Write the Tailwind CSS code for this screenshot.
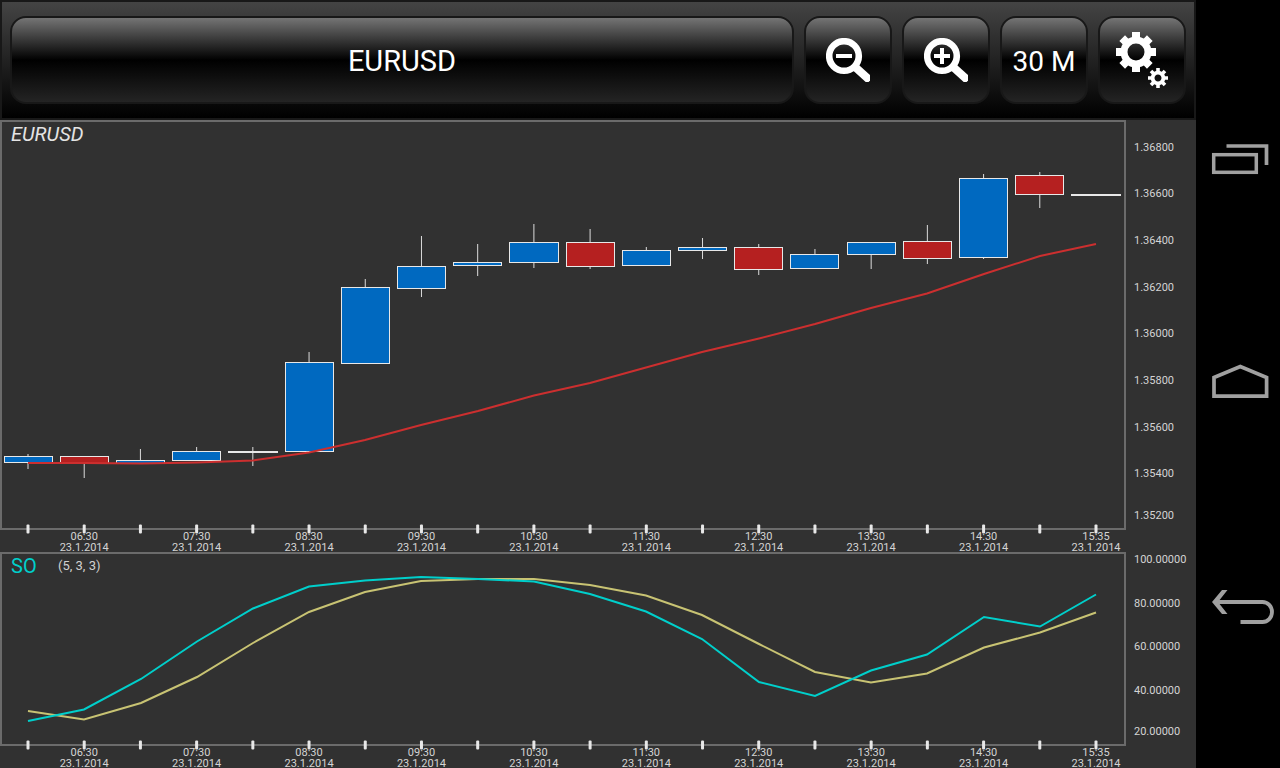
<!DOCTYPE html>
<html lang="en">
<head>
<meta charset="utf-8">
<meta name="viewport" content="width=device-width, initial-scale=1">
<title>EURUSD</title>
<script src="https://cdn.jsdelivr.net/npm/@tailwindcss/browser@4"></script>
</head>
<body class="flex min-h-screen bg-black font-[Roboto,sans-serif] text-white">
<main class="min-w-0 flex-1 bg-[#313131]">
  <header class="flex gap-2.5 border-2 border-[#181818] bg-linear-to-b/srgb from-[#444444] to-black px-2 py-3.5">
    <button type="button" class="h-22 flex-1 rounded-2xl border-2 border-[#181818] bg-linear-to-b/srgb from-[#747474] via-black to-[#242424] pt-1 text-[29px]">EURUSD</button>
    <button type="button" aria-label="Zoom out" class="flex size-22 items-center justify-center rounded-2xl border-2 border-[#181818] bg-linear-to-b/srgb from-[#747474] via-black to-[#242424]">
      <svg class="size-11" viewBox="0 0 44 44" fill="none" stroke="#fff">
        <circle cx="18" cy="18" r="14.8" stroke-width="6.6"/>
        <path d="M10 18H26" stroke-width="4"/>
        <path d="M28 28L44 42.5" stroke-width="8"/>
      </svg>
    </button>
    <button type="button" aria-label="Zoom in" class="flex size-22 items-center justify-center rounded-2xl border-2 border-[#181818] bg-linear-to-b/srgb from-[#747474] via-black to-[#242424]">
      <svg class="size-11" viewBox="0 0 44 44" fill="none" stroke="#fff">
        <circle cx="18" cy="18" r="14.8" stroke-width="6.6"/>
        <path d="M10 18H26M18 10V26" stroke-width="4"/>
        <path d="M28 28L44 42.5" stroke-width="8"/>
      </svg>
    </button>
    <button type="button" class="size-22 rounded-2xl border-2 border-[#181818] bg-linear-to-b/srgb from-[#747474] via-black to-[#242424] pt-1 text-[28px] whitespace-nowrap">30 M</button>
    <button type="button" aria-label="Settings" class="flex size-22 items-center justify-center rounded-2xl border-2 border-[#181818] bg-linear-to-b/srgb from-[#747474] via-black to-[#242424]">
      <svg class="h-14 w-[52px]" viewBox="0 0 52 56" fill="none" stroke="#fff">
        <g transform="translate(20 20)">
          <circle r="12" stroke-width="7"/>
          <path stroke-width="8" d="M0 -13V-20M0 13V20M-13 0H-20M13 0H20M9 -9L13.8 -13.8M9 9L13.8 13.8M-9 9L-13.8 13.8M-9 -9L-13.8 -13.8"/>
        </g>
        <g transform="translate(42 46)">
          <circle r="5.4" stroke-width="3.8"/>
          <path stroke-width="3.6" d="M0 -6V-10M0 6V10M-6 0H-10M6 0H10M4.5 -4.5L7 -7M4.5 4.5L7 7M-4.5 4.5L-7 7M-4.5 -4.5L-7 -7"/>
        </g>
      </svg>
    </button>
  </header>

  <svg id="price" class="block h-auto w-full overflow-visible" viewBox="0 120 1196 432" role="img" aria-label="EURUSD price chart">
    <rect x="1" y="121" width="1124" height="408" fill="none" stroke="#6b6b6b" stroke-width="2"/>
    <text x="11" y="141" class="fill-[#e4e4e4] text-[20px] italic">EURUSD</text>
    <g id="candles"></g>
    <polyline fill="none" stroke="#cc2f2f" stroke-width="2" points="28,463 84,463 141,463.5 197,462.5 253,460.5 309,452.5 365,440 421,425 478,411 534,395.5 590,383 646,367.5 702,352 759,338.5 815,324 871,308 927,293.5 984,274 1040,256 1096,244"/>
  </svg>

  <svg id="oscillator" class="block h-auto w-full" viewBox="0 552 1196 216" role="img" aria-label="Stochastic oscillator">
    <rect x="1" y="553" width="1124" height="192" fill="none" stroke="#6b6b6b" stroke-width="2"/>
    <text x="11" y="573" class="fill-[#00cfcb] text-[20px]">SO</text>
    <text x="58" y="570" class="fill-[#d0d0d0] text-[13px]">(5, 3, 3)</text>
    <polyline fill="none" stroke="#c8c373" stroke-width="2" points="28,711 84,719.5 141,703 197,677 253,643 309,612 365,592 421,581 478,579 534,579 590,585 646,595.5 702,615 759,644 815,672 871,682.5 927,673.5 984,647.5 1040,632.5 1096,612.5"/>
    <polyline fill="none" stroke="#00cfcb" stroke-width="2" points="28,721 84,709.5 141,679 197,641.5 253,608.5 309,586.5 365,580.5 421,577 478,579 534,581.5 590,594 646,611.5 702,639 759,682 815,696 871,670.5 927,654.5 984,617 1040,626.5 1096,594.5"/>
  </svg>
</main>

<nav aria-label="System" class="flex w-21 shrink-0 flex-col items-center justify-start bg-black pt-12">
  <button type="button" aria-label="Recent apps" class="flex h-56 w-full items-center justify-center">
    <svg class="h-15 w-21" viewBox="0 0 84 60" fill="none" stroke="#a0a0a0">
      <rect x="17.7" y="24.7" width="42.6" height="17.6" stroke-width="3.5"/>
      <path d="M30.5 16H70.5V35" stroke-width="3.7"/>
    </svg>
  </button>
  <button type="button" aria-label="Home" class="flex h-56 w-full items-center justify-center">
    <svg class="h-15 w-21" viewBox="0 4 84 60" fill="none" stroke="#a0a0a0">
      <path d="M18 27.5L44.3 16.6L70.6 27.5V46.2H18Z" stroke-width="3.7"/>
    </svg>
  </button>
  <button type="button" aria-label="Back" class="flex h-56 w-full items-center justify-center">
    <svg class="h-15 w-21" viewBox="0 3 84 60" fill="none" stroke="#a0a0a0">
      <path d="M20 27H66.5A9.5 10 0 0 1 66.5 47H44.5" stroke-width="3.8"/>
      <path d="M16 27L26 15H31.5L22 27L31.5 39H26Z" fill="#a0a0a0" stroke="none"/>
    </svg>
  </button>
</nav>

<script>
const NS = 'http://www.w3.org/2000/svg';
function add(parent, tag, attrs, text) {
  const el = document.createElementNS(NS, tag);
  for (const k in attrs) el.setAttribute(k, attrs[k]);
  if (text) el.textContent = text;
  parent.appendChild(el);
}
const price = document.getElementById('price');
const osc = document.getElementById('oscillator');
const label = 'fill-[#d4d4d4] text-[11px]';
const step = 1068 / 19;

// Ticks and time labels under both charts
const times = ['06:30','07:30','08:30','09:30','10:30','11:30','12:30','13:30','14:30','15:35'];
for (const [svg, axis] of [[price, 529], [osc, 745]]) {
  for (let i = 0; i < 20; i++) {
    const x = 28 + step * i;
    add(svg, 'rect', {x: x - 1.5, y: axis - 4.5, width: 3, height: 9, rx: 1, fill: '#e8e8e8'});
    if (i % 2) {
      add(svg, 'text', {x, y: axis + 11, 'text-anchor': 'middle', class: label}, times[(i - 1) / 2]);
      add(svg, 'text', {x, y: axis + 22, 'text-anchor': 'middle', class: label}, '23.1.2014');
    }
  }
}

// Value axes
[['1.36800',151],['1.36600',197],['1.36400',244],['1.36200',291],['1.36000',337],['1.35800',384],['1.35600',431],['1.35400',477],['1.35200',519]]
  .forEach(([t, y]) => add(price, 'text', {x: 1134, y, class: label}, t));
[['100.00000',563],['80.00000',607],['60.00000',650],['40.00000',694],['20.00000',735]]
  .forEach(([t, y]) => add(osc, 'text', {x: 1134, y, class: label}, t));

// left, right, body top, body bottom, wick top, wick bottom, direction
const candles = [
  [4,53,456,463,454,469,'up'],[60,109,456,464,456,478,'down'],[116,165,460,464,449,464,'up'],
  [172,221,451,461,447,461,'up'],[228,278,451,453,447,466,'flat'],[285,334,362,452,352,452,'up'],
  [341,390,287,364,279,364,'up'],[397,446,266,289,236,297,'up'],[453,502,262,266,244,276,'up'],
  [509,559,242,263,224,268,'up'],[566,615,242,267,229,269,'down'],[622,671,250,266,247,266,'up'],
  [678,727,247,251,238,259,'up'],[734,783,247,270,244,275,'down'],[790,839,254,269,249,269,'up'],
  [847,896,242,255,242,269,'up'],[903,952,241,259,225,264,'down'],[959,1008,178,258,174,259,'up'],
  [1015,1064,175,195,172,208,'down'],[1071,1121,194,196,194,196,'flat']
];
const group = document.getElementById('candles');
candles.forEach(([l, r, t, b, wt, wb, dir], i) => {
  const x = 28 + step * i;
  add(group, 'path', {d: `M${x} ${wt}V${wb}`, stroke: '#dcdcdc', 'stroke-width': 1});
  if (dir === 'flat') add(group, 'rect', {x: l, y: t, width: r - l, height: b - t, fill: '#e8e8e8'});
  else add(group, 'rect', {x: l + 0.5, y: t + 0.5, width: r - l - 1, height: b - t - 1, stroke: '#e8e8e8', fill: dir === 'up' ? '#0069c0' : '#b52020'});
});
</script>
</body>
</html>
